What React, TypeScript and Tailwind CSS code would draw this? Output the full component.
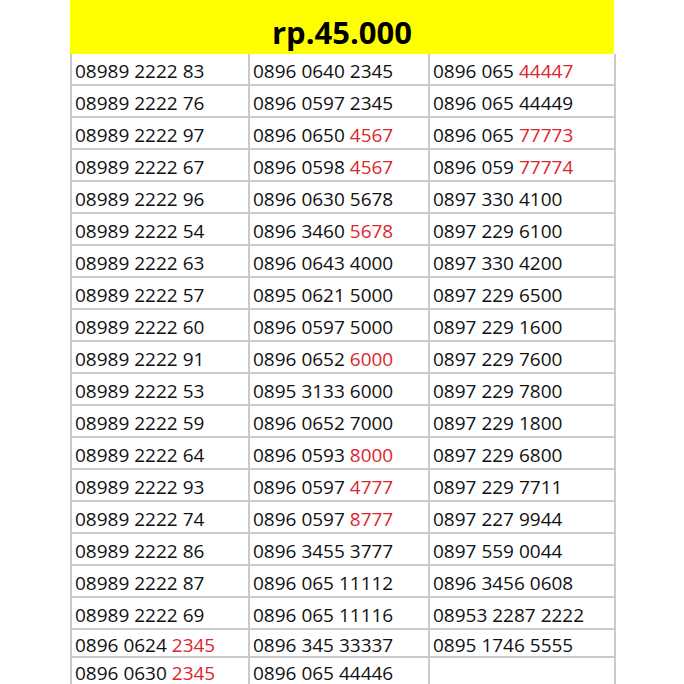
type Cell = [string, string?];

const ROWS: Cell[][] = [
  [["08989 2222 83"], ["0896 0640 2345"], ["0896 065 ", "44447"]],
  [["08989 2222 76"], ["0896 0597 2345"], ["0896 065 44449"]],
  [["08989 2222 97"], ["0896 0650 ", "4567"], ["0896 065 ", "77773"]],
  [["08989 2222 67"], ["0896 0598 ", "4567"], ["0896 059 ", "77774"]],
  [["08989 2222 96"], ["0896 0630 5678"], ["0897 330 4100"]],
  [["08989 2222 54"], ["0896 3460 ", "5678"], ["0897 229 6100"]],
  [["08989 2222 63"], ["0896 0643 4000"], ["0897 330 4200"]],
  [["08989 2222 57"], ["0895 0621 5000"], ["0897 229 6500"]],
  [["08989 2222 60"], ["0896 0597 5000"], ["0897 229 1600"]],
  [["08989 2222 91"], ["0896 0652 ", "6000"], ["0897 229 7600"]],
  [["08989 2222 53"], ["0895 3133 6000"], ["0897 229 7800"]],
  [["08989 2222 59"], ["0896 0652 7000"], ["0897 229 1800"]],
  [["08989 2222 64"], ["0896 0593 ", "8000"], ["0897 229 6800"]],
  [["08989 2222 93"], ["0896 0597 ", "4777"], ["0897 229 7711"]],
  [["08989 2222 74"], ["0896 0597 ", "8777"], ["0897 227 9944"]],
  [["08989 2222 86"], ["0896 3455 3777"], ["0897 559 0044"]],
  [["08989 2222 87"], ["0896 065 11112"], ["0896 3456 0608"]],
  [["08989 2222 69"], ["0896 065 11116"], ["08953 2287 2222"]],
  [["0896 0624 ", "2345"], ["0896 345 33337"], ["0895 1746 5555"]],
  [["0896 0630 ", "2345"], ["0896 065 44446"], [""]],
];

export default function App() {
  return (
    <div className="h-[684px] w-[684px] overflow-hidden bg-white pl-[70px] font-['Open_Sans',sans-serif] text-[19px] text-[#111]">
      <div className="w-[544px]">
        <div className="flex h-[54px] items-center justify-center bg-[#ffff00] pt-[10px] text-[31px] font-bold leading-none text-black">
          rp.45.000
        </div>
        <div className="grid grid-cols-[178px_180px_186px] border-l-2 border-[#c9c9c9]">
          {ROWS.map((row, i) =>
            row.map((cell, j) => (
              <div
                key={`${i}-${j}`}
                className={`flex items-end border-r-2 border-b-2 border-[#c9c9c9] pl-[3px] leading-none ${
                  i < 18 ? "h-[32px] pb-[3px]" : "h-[28px] pb-[1px]"
                }`}
              >
                <span>
                  {cell[0]}
                  {cell[1] && <span className="text-[#e0242c]">{cell[1]}</span>}
                </span>
              </div>
            ))
          )}
        </div>
      </div>
    </div>
  );
}
